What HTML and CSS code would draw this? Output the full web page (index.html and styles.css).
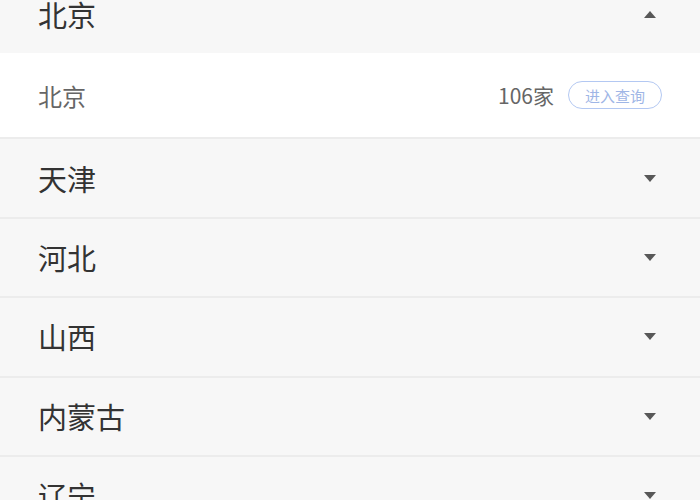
FILE: index.html
```html
<!DOCTYPE html>
<html lang="zh-CN">
<head>
  <meta charset="UTF-8">
  <title>地区列表</title>
  <link rel="stylesheet" href="styles.css">
</head>
<body>
  <div class="region-list">
    <div class="region open">
      <div class="region-head">
        <span class="region-name">北京</span>
        <span class="arrow up"></span>
      </div>
      <div class="region-body">
        <span class="city">北京</span>
        <span class="count">106家</span>
        <span class="query-btn">进入查询</span>
      </div>
    </div>
    <div class="region">
      <div class="region-head">
        <span class="region-name">天津</span>
        <span class="arrow"></span>
      </div>
    </div>
    <div class="region">
      <div class="region-head">
        <span class="region-name">河北</span>
        <span class="arrow"></span>
      </div>
    </div>
    <div class="region">
      <div class="region-head">
        <span class="region-name">山西</span>
        <span class="arrow"></span>
      </div>
    </div>
    <div class="region">
      <div class="region-head">
        <span class="region-name">内蒙古</span>
        <span class="arrow"></span>
      </div>
    </div>
    <div class="region">
      <div class="region-head">
        <span class="region-name">辽宁</span>
        <span class="arrow"></span>
      </div>
    </div>
  </div>
</body>
</html>
```

FILE: styles.css
```css
body {
  margin: 0;
  background: #f7f7f7;
  font-family: "Noto Sans CJK SC", "Noto Sans", sans-serif;
  overflow: hidden;
}

.region-list {
  margin-top: -24px;
}

.region {
  border-bottom: 2px solid #ececec;
}

.region-head {
  height: 77.4px;
  display: flex;
  align-items: center;
  justify-content: space-between;
  padding: 0 44px 0 38px;
  background: #f7f7f7;
}

.region-name {
  font-size: 29px;
  color: #333;
  line-height: 1;
}

.arrow {
  width: 0;
  height: 0;
  border-left: 6.5px solid transparent;
  border-right: 6.5px solid transparent;
  border-top: 7px solid #585858;
}

.arrow.up {
  border-top: 0;
  border-bottom: 7px solid #585858;
}

.region-body {
  height: 84px;
  display: flex;
  align-items: center;
  padding: 0 38px;
  background: #fff;
}

.city {
  font-size: 24px;
  color: #666;
  flex: 1;
}

.count {
  font-size: 21px;
  color: #666;
  margin-right: 14px;
}

.query-btn {
  height: 26px;
  width: 92px;
  border: 1px solid #b3c8f2;
  border-radius: 14px;
  color: #9fb6e6;
  font-size: 15px;
  display: flex;
  align-items: center;
  justify-content: center;
}
```
